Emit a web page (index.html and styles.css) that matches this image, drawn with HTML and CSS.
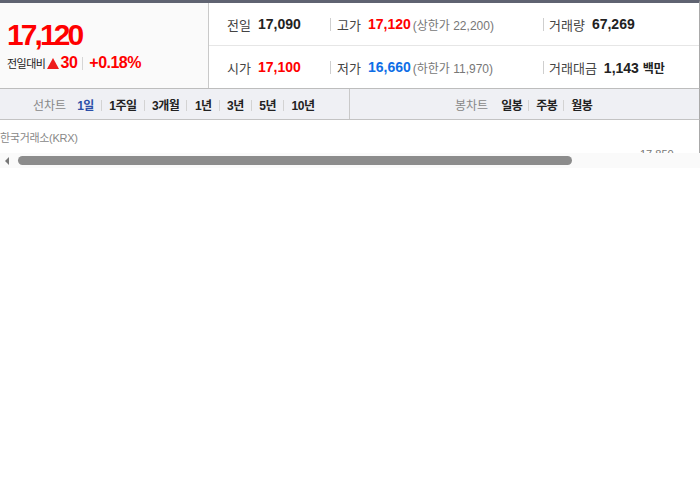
FILE: index.html
```html
<!DOCTYPE html>
<html lang="ko">
<head>
<meta charset="utf-8">
<link rel="stylesheet" href="styles.css">
</head>
<body>
<div class="quote">
  <div class="now">
    <div class="price">17,120</div>
    <div class="change">
      <span class="lbl">전일대비</span>
      <span class="tri"></span>
      <span class="up">30</span>
      <span class="sep"></span>
      <span class="up">+0.18%</span>
    </div>
  </div>
  <div class="info">
    <div class="row">
      <div class="cell c1"><span class="k">전일</span><span class="v">17,090</span></div>
      <div class="cell c2"><span class="k">고가</span><span class="v red">17,120</span><span class="lim">(상한가 22,200)</span></div>
      <div class="cell c3"><span class="k">거래량</span><span class="v">67,269</span></div>
    </div>
    <div class="row">
      <div class="cell c1"><span class="k">시가</span><span class="v red">17,100</span></div>
      <div class="cell c2"><span class="k">저가</span><span class="v blue">16,660</span><span class="lim">(하한가 11,970)</span></div>
      <div class="cell c3"><span class="k">거래대금</span><span class="v">1,143 <span class="unit">백만</span></span></div>
    </div>
  </div>
</div>
<div class="tabs">
  <div class="tabgroup left">
    <span class="tlabel">선차트</span>
    <span class="tab on">1일</span>
    <span class="tab">1주일</span>
    <span class="tab">3개월</span>
    <span class="tab">1년</span>
    <span class="tab">3년</span>
    <span class="tab">5년</span>
    <span class="tab">10년</span>
  </div>
  <div class="tabgroup right">
    <span class="tlabel">봉차트</span>
    <span class="tab">일봉</span>
    <span class="tab">주봉</span>
    <span class="tab">월봉</span>
  </div>
</div>
<div class="chart">
  <div class="source">한국거래소(KRX)</div>
  <span class="axis">17,850</span>
</div>
<div class="scroll">
  <span class="arrow"></span>
  <span class="thumb"></span>
</div>
</body>
</html>
```

FILE: styles.css
```css
* { box-sizing: border-box; }
body {
  margin: 0;
  background: #fff;
  font-family: "Liberation Sans", Arial, "Noto Sans CJK KR", sans-serif;
  color: #333;
  width: 700px;
}
.quote {
  display: flex;
  height: 89px;
  border-top: 3px solid #5f6371;
  border-bottom: 1px solid #bdbdbd;
  border-right: 1px solid #a9a9a9;
}
.now {
  width: 209px;
  background: #fafafa;
  border-right: 1px solid #c9c9c9;
  padding: 15px 0 0 7px;
}
.price {
  color: #f00;
  font-weight: bold;
  font-size: 30px;
  letter-spacing: -2.9px;
  line-height: 34px;
}
.change {
  display: flex;
  align-items: center;
  height: 22px;
}
.change .lbl {
  font-size: 11px;
  color: #222;
  letter-spacing: -0.5px;
  margin-right: 2px;
}
.tri {
  width: 0; height: 0;
  border-left: 6px solid transparent;
  border-right: 6px solid transparent;
  border-bottom: 11px solid #ee1c1c;
  margin-right: 1px;
}
.up {
  color: #f00;
  font-weight: bold;
  font-size: 16px;
  letter-spacing: -0.5px;
}
.sep {
  width: 1px;
  height: 13px;
  background: #d6d6d6;
  margin: 0 6px 0 5px;
}
.info {
  flex: 1;
  display: flex;
  flex-direction: column;
}
.row {
  flex: 1;
  display: flex;
  align-items: center;
  padding-left: 18px;
}
.row + .row { border-top: 1px solid #e6e6e6; }
.cell {
  display: flex;
  align-items: center;
  font-size: 13px;
  height: 13px;
}
.c1 { width: 103px; }
.c2 { width: 213px; border-left: 1px solid #cfcfcf; padding-left: 6px; }
.c3 { border-left: 1px solid #cfcfcf; padding-left: 5px; }
.k {
  color: #444;
  margin-right: 7px;
  font-size: 13px;
}
.v {
  font-weight: bold;
  color: #222;
  font-size: 14px;
}
.unit { font-size: 12px; }
.red { color: #f00; }
.blue { color: #0e6ee6; }
.lim {
  color: #777;
  font-size: 12px;
  margin-left: 2px;
}
.tabs {
  display: flex;
  height: 31px;
  background: #eff0f4;
  border-bottom: 1px solid #c3c3c3;
  border-right: 1px solid #a9a9a9;
}
.tabgroup {
  display: flex;
  align-items: center;
  font-size: 12px;
}
.tabgroup.left {
  width: 350px;
  border-right: 1px solid #c9c9c9;
  padding-left: 33px;
}
.tabgroup.right { flex: 1; padding-left: 105px; }
.tlabel {
  color: #888;
  margin-right: 11px;
}
.tabgroup.right .tlabel { margin-right: 13px; }
.tab {
  font-weight: bold;
  color: #222;
  letter-spacing: -0.5px;
}
.tab + .tab::before {
  content: "";
  display: inline-block;
  width: 1px;
  height: 11px;
  background: #d3d3d3;
  margin: 0 7.5px 0 7px;
  vertical-align: -1px;
}
.tabgroup.right .tab + .tab::before { margin: 0 7px 0 6px; }
.tab.on { color: #2c4fa8; }
.chart {
  position: relative;
  height: 33px;
  border-right: 1px solid #a9a9a9;
  overflow: hidden;
}
.source {
  padding-top: 9px;
  font-size: 11px;
  color: #888;
  letter-spacing: -0.3px;
}
.axis {
  position: absolute;
  left: 640px;
  top: 28px;
  font-size: 11px;
  color: #777;
}
.scroll {
  display: flex;
  align-items: center;
  height: 15px;
  background: #fafafa;
  padding-left: 5px;
}
.arrow {
  width: 0; height: 0;
  border-top: 4px solid transparent;
  border-bottom: 4px solid transparent;
  border-right: 4px solid #777;
  margin-right: 9px;
}
.thumb {
  width: 554px;
  height: 9px;
  border-radius: 5px;
  background: #8c8c8c;
}
```
